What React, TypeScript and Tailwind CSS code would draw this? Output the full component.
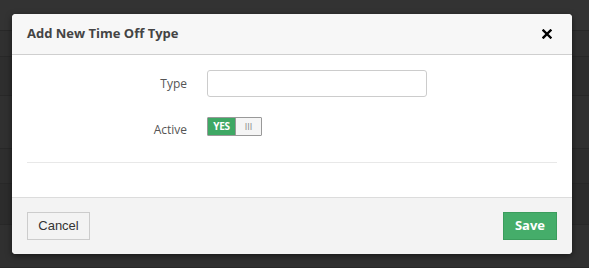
import React from "react";

const rows = [
  { h: 31, c: "bg-[#333333]" },
  { h: 26, c: "bg-[#303030]" },
  { h: 39, c: "bg-[#2e2e2e]" },
  { h: 53, c: "bg-[#303030]" },
  { h: 35, c: "bg-[#2e2e2e]" },
  { h: 41, c: "bg-[#2c2c2c]" },
  { h: 43, c: "bg-[#303030]" },
];

export default function App() {
  return (
    <div className="relative w-[589px] h-[268px] overflow-hidden bg-[#303030]" style={{ fontFamily: '"Open Sans", sans-serif' }}>
      <div className="flex flex-col">
        {rows.map((r, i) => (
          <div key={i} className={`${r.c} border-b border-[#282828]`} style={{ height: r.h }} />
        ))}
      </div>
      <div className="absolute left-[12px] top-[14px] w-[560px] h-[240px] rounded-[4px] overflow-hidden bg-white flex flex-col shadow-[0_2px_6px_rgba(0,0,0,0.5)]">
        <div className="h-[41px] bg-[#f7f7f7] border-b border-[#cfcfcf] flex items-center justify-between pl-[15px] pr-[20px]">
          <span className="text-[13px] font-bold text-[#444]">Add New Time Off Type</span>
          <svg width="10" height="10" viewBox="0 0 10 10">
            <path d="M1.5 1.5 L8.5 8.5 M8.5 1.5 L1.5 8.5" stroke="#000" strokeWidth="2.4" strokeLinecap="square" />
          </svg>
        </div>
        <div className="flex-1 bg-white px-[15px] flex flex-col">
          <div className="flex items-center mt-[15px] h-[27px]">
            <label className="w-[160px] text-right text-[12px] text-[#555]">Type</label>
            <input className="ml-[20px] w-[220px] h-[27px] border border-[#cccccc] rounded-[3px] bg-white outline-none" />
          </div>
          <div className="flex items-center mt-[20px] h-[19px]">
            <label className="w-[160px] text-right text-[12px] text-[#555] mt-[6px]">Active</label>
            <div className="ml-[20px] flex h-[19px] w-[55px] border border-[#999] rounded-[1px] overflow-hidden">
              <div className="w-[27px] bg-[#3ea864] text-white text-[10px] font-bold flex items-center justify-center tracking-tight">YES</div>
              <div className="flex-1 bg-[#f5f5f5] border-l border-[#999] text-[#888] text-[9px] flex items-center justify-center">III</div>
            </div>
          </div>
          <div className="mt-[26px] border-t border-[#e8e8e8]" />
        </div>
        <div className="h-[57px] bg-[#f3f3f3] border-t border-[#dcdcdc] flex items-center justify-between px-[15px]">
          <button className="h-[28px] w-[63px] border border-[#cccccc] bg-[#f3f3f3] text-[13px] text-[#333]" style={{ fontFamily: '"Liberation Sans", Arial, sans-serif' }}>Cancel</button>
          <button className="h-[28px] w-[54px] border border-[#3b9d5d] bg-[#45ad6a] text-[13px] font-bold text-white">Save</button>
        </div>
      </div>
    </div>
  );
}
